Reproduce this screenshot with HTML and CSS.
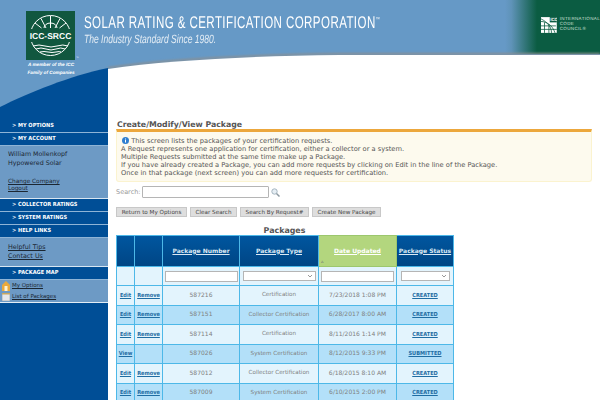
FILE: index.html
```html
<!DOCTYPE html>
<html lang="en">

<head>
    <meta charset="UTF-8">
    <title>Create/Modify/View Package</title>
    <link rel="stylesheet" href="styles.css">
</head>

<body>
    <!-- banner curve, sits behind everything -->
    <svg class="banner-art" width="600" height="400" viewBox="0 0 600 400">
        <defs>
            <linearGradient id="iccFade" x1="0" x2="1" y1="0" y2="0">
                <stop offset="0" stop-color="#6699c6" />
                <stop offset="0.2" stop-color="#5f93b8" />
                <stop offset="1" stop-color="#0b5c42" />
            </linearGradient>
            <filter id="soft" x="-5%" y="-20%" width="110%" height="140%">
                <feGaussianBlur stdDeviation="0.8" />
            </filter>
        </defs>
        <rect x="505" y="0" width="32" height="54" fill="url(#iccFade)" />
        <rect x="537" y="0" width="63" height="54" fill="#0b5c42" />
        <path d="M108 68 C170 59 250 55 340 54 L600 54" fill="none" stroke="#8a8f92" stroke-width="2" filter="url(#soft)" />
        <path d="M108 69 C170 60 250 56 340 55 L600 55 L600 400 L108 400 Z" fill="#fff" />
        <path d="M0 107 C30 92 70 76 108 68 L108 400 L0 400 Z" fill="#004e96" />
    </svg>

    <header class="banner">
        <div class="brand">
            <svg class="brand-logo" width="49" height="49" viewBox="0 0 49 49">
                <rect width="49" height="49" fill="#11573f" />
                <circle cx="24.500" cy="24.500" r="20" fill="none" stroke="#fff" stroke-width="1" />
                <g stroke="#fff" stroke-width="1" fill="none">
                    <path d="M24.500 17 V5 M20 17 L15 7.500 M29 17 L34 7.500 M15.500 17 L9 12 M33.500 17 L40 12" />
                    <path d="M18 17 A6.500 5 0 0 1 31 17" />
                    <path d="M7 35 Q13 33 19 35 T31 35 T42 35" />
                    <path d="M10 38 Q15 36 20 38 T30 38 T39 38" />
                    <path d="M14 41 Q18 40 22 41 T30 41 T35 41" />
                </g>
                <rect x="3" y="18" width="43" height="13" fill="#11573f" />
                <text x="24.500" y="28" class="brand-logo-text" text-anchor="middle">ICC-SRCC</text>
            </svg>
            <span class="brand-tm">™</span>
            <div class="brand-note">A member of the ICC<br>Family of Companies</div>
        </div>
        <div class="titles">
            <div class="title-main">SOLAR RATING &amp; CERTIFICATION CORPORATION<sup>™</sup></div>
            <div class="title-sub">The Industry Standard Since 1980.</div>
        </div>
        <div class="icc">
            <svg width="18" height="18" viewBox="0 0 18 18">
                <rect width="18" height="18" fill="#fff" />
                <g stroke="#0b5c42" stroke-width="0.9" fill="none">
                    <path d="M0 5 C6 5 13 9 16 18 M0 10 H17 M0 14 H18 M4 6 V18 M9 8 V18 M12 18 C12 12 8 6 0 2" />
                </g>
                <rect x="10" y="0" width="8" height="6" fill="#0b5c42" />
                <text x="10.500" y="5" class="icc-mark">ICC</text>
            </svg>
            <div class="icc-name">INTERNATIONAL<br>CODE<br>COUNCIL®</div>
        </div>
    </header>

    <div class="layout">
        <nav class="sidebar">
            <div class="side-head">&gt; MY OPTIONS</div>
            <div class="side-head">&gt; MY ACCOUNT</div>
            <div class="side-panel side-account">
                <div>William Mollenkopf</div>
                <div>Hypowered Solar</div>
                <a class="account-link" href="#">Change Company</a>
                <a href="#">Logout</a>
            </div>
            <div class="side-head">&gt; COLLECTOR RATINGS</div>
            <div class="side-head">&gt; SYSTEM RATINGS</div>
            <div class="side-head">&gt; HELP LINKS</div>
            <div class="side-panel side-help">
                <a href="#">Helpful Tips</a>
                <a href="#">Contact Us</a>
            </div>
            <div class="side-head">&gt; PACKAGE MAP</div>
            <div class="side-map">
                <a href="#">
                    <svg width="8" height="10" viewBox="0 0 8 10">
                        <path d="M4 0 L8 4 V10 H0 V4 Z" fill="#e9a93c" />
                        <rect x="2.500" y="5" width="3" height="5" fill="#fff3d0" />
                    </svg>
                    My Options
                </a>
                <a href="#">
                    <svg width="8" height="8" viewBox="0 0 8 8">
                        <rect width="8" height="8" fill="#e6e8ea" stroke="#8b8f94" stroke-width="0.6" />
                        <rect y="0" width="8" height="1.500" fill="#c9a860" />
                    </svg>
                    List of Packages
                </a>
            </div>
        </nav>

        <main class="content">
            <h1 class="page-title">Create/Modify/View Package</h1>
            <div class="info-box">
                <div>
                    <svg class="info-icon" width="7" height="7" viewBox="0 0 7 7">
                        <circle cx="3.500" cy="3.500" r="3.500" fill="#2f7fd1" />
                        <rect x="3" y="3" width="1" height="2.500" fill="#fff" />
                        <rect x="3" y="1.500" width="1" height="1" fill="#fff" />
                    </svg>
                    This screen lists the packages of your certification requests.
                </div>
                <div>A Request represents one application for certification, either a collector or a system.</div>
                <div>Multiple Requests submitted at the same time make up a Package.</div>
                <div>If you have already created a Package, you can add more requests by clicking on Edit in the line of the Package.</div>
                <div>Once in that package (next screen) you can add more requests for certification.</div>
            </div>

            <div class="search-row">
                <label class="search-label" for="search">Search:</label>
                <input class="search-input" id="search" type="text">
                <svg width="9" height="9" viewBox="0 0 9 9">
                    <circle cx="3.500" cy="3.500" r="2.700" fill="#e6eef4" stroke="#a5b5c0" stroke-width="1" />
                    <path d="M5.500 5.500 L8.500 8.500" stroke="#8d99a1" stroke-width="1.500" />
                </svg>
            </div>

            <div class="button-row">
                <button class="btn-return">Return to My Options</button>
                <button class="btn-clear">Clear Search</button>
                <button class="btn-request">Search By Request#</button>
                <button class="btn-create">Create New Package</button>
            </div>

            <div class="table-wrap">
                <div class="table-title">Packages</div>
                <table class="packages">
                    <colgroup>
                        <col class="col-edit">
                        <col class="col-remove">
                        <col class="col-number">
                        <col class="col-type">
                        <col class="col-date">
                        <col class="col-status">
                    </colgroup>
                    <thead>
                        <tr class="head-row">
                            <th></th>
                            <th></th>
                            <th><a href="#">Package Number</a></th>
                            <th><a href="#">Package Type</a></th>
                            <th class="sorted"><a href="#">Date Updated</a><span class="sort-mark">▵</span></th>
                            <th><a href="#">Package Status</a></th>
                        </tr>
                        <tr class="filter-row">
                            <td></td>
                            <td></td>
                            <td><input type="text"></td>
                            <td><select></select></td>
                            <td><input type="text"></td>
                            <td><select></select></td>
                        </tr>
                    </thead>
                    <tbody>
                        <tr>
                            <td><a href="#">Edit</a></td>
                            <td><a href="#">Remove</a></td>
                            <td>587216</td>
                            <td class="cell-type">Certification</td>
                            <td>7/23/2018 1:08 PM</td>
                            <td><a href="#">CREATED</a></td>
                        </tr>
                        <tr>
                            <td><a href="#">Edit</a></td>
                            <td><a href="#">Remove</a></td>
                            <td>587151</td>
                            <td class="cell-type">Collector Certification</td>
                            <td>6/28/2017 8:00 AM</td>
                            <td><a href="#">CREATED</a></td>
                        </tr>
                        <tr>
                            <td><a href="#">Edit</a></td>
                            <td><a href="#">Remove</a></td>
                            <td>587114</td>
                            <td class="cell-type">Certification</td>
                            <td>8/11/2016 1:14 PM</td>
                            <td><a href="#">CREATED</a></td>
                        </tr>
                        <tr>
                            <td><a href="#">View</a></td>
                            <td></td>
                            <td>587026</td>
                            <td class="cell-type">System Certification</td>
                            <td>8/12/2015 9:33 PM</td>
                            <td><a href="#">SUBMITTED</a></td>
                        </tr>
                        <tr>
                            <td><a href="#">Edit</a></td>
                            <td><a href="#">Remove</a></td>
                            <td>587012</td>
                            <td class="cell-type">Collector Certification</td>
                            <td>6/18/2015 8:10 AM</td>
                            <td><a href="#">CREATED</a></td>
                        </tr>
                        <tr>
                            <td><a href="#">Edit</a></td>
                            <td><a href="#">Remove</a></td>
                            <td>587009</td>
                            <td class="cell-type">System Certification</td>
                            <td>6/10/2015 2:00 PM</td>
                            <td><a href="#">CREATED</a></td>
                        </tr>
                    </tbody>
                </table>
            </div>
        </main>
    </div>
</body>

</html>
```

FILE: styles.css
```css
html,
body {
    margin: 0;
    padding: 0;
    height: 100%;
    overflow: hidden;
}

body {
    position: relative;
    background: #6699c6;
    font-family: "DejaVu Sans", Verdana, sans-serif;
    font-size: 7px;
    color: #555;
    text-rendering: geometricPrecision;
}

.banner-art {
    position: absolute;
    top: 0;
    left: 0;
}

/* banner */
.banner {
    position: relative;
    display: flex;
    height: 54px;
    color: #fff;
}

.brand {
    position: relative;
    width: 84px;
    flex: none;
    padding: 11px 0 0 26px;
    box-sizing: border-box;
}

.brand-logo {
    display: block;
}

.brand-logo-text {
    font-family: "Liberation Sans", Arial, sans-serif;
    font-size: 8.500px;
    font-weight: bold;
    fill: #fff;
}

.brand-tm {
    position: absolute;
    left: 76px;
    top: 56px;
    font-size: 3px;
}

.brand-note {
    width: 50px;
    margin-top: 1px;
    font-family: "Liberation Sans", Arial, sans-serif;
    font-size: 4.700px;
    font-style: italic;
    font-weight: bold;
    line-height: 7.500px;
    text-align: center;
    white-space: nowrap;
}

.titles {
    flex: 1;
    padding-top: 14px;
    font-family: "Liberation Sans", Arial, sans-serif;
    white-space: nowrap;
}

.title-main {
    font-size: 17px;
    line-height: 18px;
    letter-spacing: 0.6px;
    transform: scaleX(0.68);
    transform-origin: left;
}

.title-main sup {
    font-size: 6px;
    vertical-align: 7px;
    line-height: 0;
}

.title-sub {
    margin-top: 1px;
    font-size: 12px;
    line-height: 13px;
    font-style: italic;
    color: #e4edf5;
    transform: scaleX(0.713);
    transform-origin: left;
}

.icc {
    display: flex;
    gap: 3px;
    width: 59px;
    flex: none;
    padding-top: 16px;
    box-sizing: border-box;
}

.icc-mark {
    font-family: "Liberation Sans", Arial, sans-serif;
    font-size: 5px;
    font-weight: bold;
    fill: #fff;
}

.icc-name {
    font-family: "Liberation Sans", Arial, sans-serif;
    font-size: 4.500px;
    line-height: 5px;
    letter-spacing: 0.35px;
    color: #cfe0d8;
    white-space: nowrap;
}

/* page columns */
.layout {
    position: relative;
    display: grid;
    grid-template-columns: 108px 1fr;
}

/* sidebar */
.sidebar {
    padding-top: 66px;
}

.side-head {
    height: 12px;
    padding-left: 12px;
    border-bottom: 1px solid #8fb4d6;
    font-family: "DejaVu Sans Condensed", "DejaVu Sans", sans-serif;
    font-size: 5.600px;
    font-weight: bold;
    line-height: 12px;
    color: #fff;
    white-space: nowrap;
}

.side-panel {
    display: flex;
    flex-direction: column;
    padding-left: 8px;
    border-bottom: 1px solid #d8e6f2;
    background: #6d9ac5;
    color: #1b2733;
}

.side-panel a,
.side-map a {
    color: #1b2733;
}

.side-account {
    height: 53px;
    padding-top: 5px;
    box-sizing: border-box;
    font-size: 6.300px;
    line-height: 8.500px;
}

.account-link {
    margin-top: 11px;
    font-size: 5.800px;
    line-height: 7px;
}

.side-account a:last-child {
    font-size: 5.800px;
    line-height: 7px;
}

.side-help {
    height: 29px;
    padding-top: 5px;
    box-sizing: border-box;
    font-size: 6.400px;
    line-height: 8.500px;
}

.side-map {
    display: flex;
    flex-direction: column;
    gap: 1px;
    height: 21px;
    padding: 1px 0 0 2px;
    box-sizing: content-box;
    margin-bottom: -1px;
    border-bottom: 1px solid #e3edf5;
    background: #6d9ac5;
    font-size: 5.500px;
}

.side-map a {
    display: flex;
    align-items: center;
    gap: 2px;
    height: 10px;
}

/* main */
.content {
    padding: 66px 8px 0;
    min-width: 0;
}

.page-title {
    margin: 0;
    padding: 1px 0 0 1px;
    font-size: 7.800px;
    line-height: 8px;
    font-weight: bold;
    color: #555;
}

.info-box {
    height: 53px;
    padding: 5px 0 0 4px;
    box-sizing: border-box;
    border: 1px solid #fbf3cf;
    border-top: 3px solid #eca73c;
    border-radius: 0 0 3px 3px;
    background: #fdfaee;
    font-size: 6.700px;
    line-height: 8px;
    color: #555;
}

.info-icon {
    margin: 0 0 0 1px;
    vertical-align: -1px;
}

.search-row {
    display: flex;
    align-items: center;
    gap: 2px;
    margin-top: 4px;
    height: 12px;
}

.search-label {
    width: 24px;
    color: #999;
    font-size: 6.500px;
}

.search-input {
    width: 127px;
    height: 12px;
    margin: 0;
    padding: 0;
    box-sizing: border-box;
    border: 1px solid #b5b5b5;
    border-radius: 1px;
    background: #fff;
}

.button-row {
    display: flex;
    gap: 3px;
    margin-top: 9px;
}

.button-row button {
    height: 10px;
    margin: 0;
    padding: 0;
    border: 1px solid #c8c8c8;
    background: #dedede;
    font-family: "DejaVu Sans", Verdana, sans-serif;
    font-size: 5.650px;
    line-height: 8px;
    color: #444;
    white-space: nowrap;
}

.btn-return {
    width: 71px;
}

.btn-clear {
    width: 47px;
}

.btn-request {
    width: 69px;
}

.btn-create {
    width: 69px;
}

.table-wrap {
    width: 337px;
}

.table-title {
    margin-top: 9px;
    height: 9px;
    font-size: 7.900px;
    font-weight: bold;
    line-height: 10px;
    color: #555;
    text-align: center;
}

/* table */
.packages {
    width: 337px;
    table-layout: fixed;
    border-collapse: collapse;
    border: 1px solid #4db8e8;
    font-size: 6px;
    color: #808080;
    text-align: center;
}

.col-edit {
    width: 18px;
}

.col-remove {
    width: 28px;
}

.col-number {
    width: 77px;
}

.col-type {
    width: 79px;
}

.col-date {
    width: 78px;
}

.col-status {
    width: 57px;
}

.packages th,
.packages td {
    padding: 0;
    border: 1px solid #4db8e8;
    white-space: nowrap;
    overflow: hidden;
}

.packages a {
    font-family: "DejaVu Sans Condensed", "DejaVu Sans", sans-serif;
    font-size: 5.600px;
    font-weight: bold;
    color: #1f6da3;
}

.cell-type {
    font-size: 5.600px;
}

.head-row {
    height: 31px;
    background: linear-gradient(#00569f, #004584);
}

.packages .head-row a {
    font-family: "DejaVu Sans", Verdana, sans-serif;
    font-size: 6px;
    color: #dbe8f4;
}

.head-row th.sorted {
    position: relative;
    background: #b3d67e;
    border-color: #9cc76d;
}

.packages .head-row th.sorted a {
    color: #fff;
}

.sort-mark {
    position: absolute;
    left: 2px;
    bottom: 1px;
    font-size: 5px;
    line-height: 6px;
    color: #667;
}

.filter-row {
    height: 19px;
    background: #e3f4fd;
}

.filter-row input,
.filter-row select {
    display: block;
    width: 73px;
    height: 11px;
    margin: 0 auto;
    padding: 0;
    box-sizing: border-box;
    border: 1px solid #b5b5b5;
    background: #fff;
}

.filter-row select {
    height: 10px;
    border-radius: 0;
    font-size: 5px;
    appearance: none;
    background: #fff url("data:image/svg+xml,%3Csvg xmlns='http://www.w3.org/2000/svg' width='6' height='4'%3E%3Cpath d='M1 1 L3 3 L5 1' fill='none' stroke='%23999' stroke-width='1'/%3E%3C/svg%3E") no-repeat right 2px center;
}

.filter-row td:last-child select {
    width: 49px;
}

tbody tr {
    height: 19.500px;
}

tbody tr:nth-child(odd) {
    background: #e3f4fd;
}

tbody tr:nth-child(even) {
    background: #b3e0f9;
}
```
